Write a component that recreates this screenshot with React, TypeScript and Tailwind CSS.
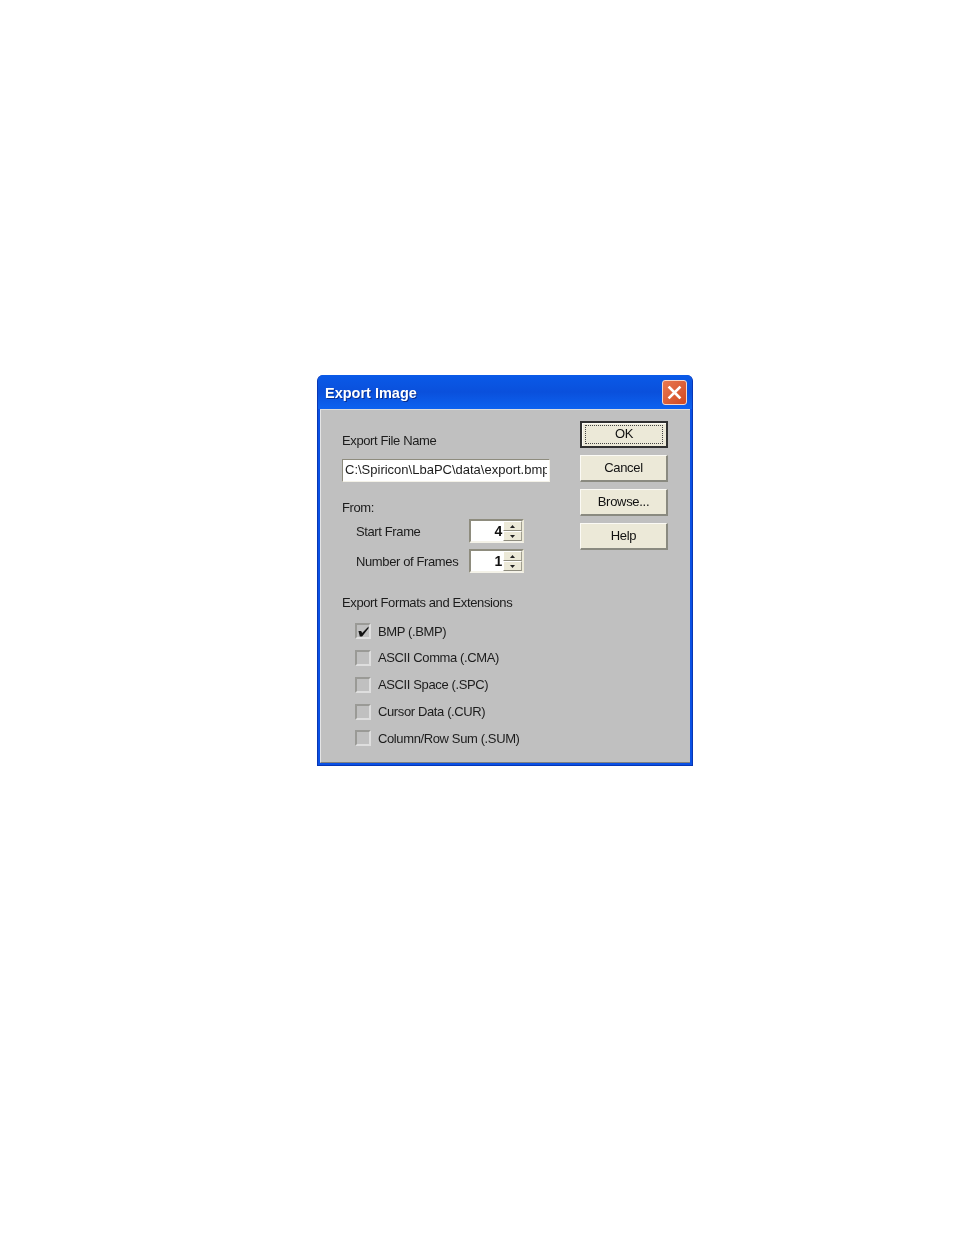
import React from 'react';

const formats = [
  { label: 'BMP (.BMP)', checked: true },
  { label: 'ASCII Comma (.CMA)', checked: false },
  { label: 'ASCII Space (.SPC)', checked: false },
  { label: 'Cursor Data (.CUR)', checked: false },
  { label: 'Column/Row Sum (.SUM)', checked: false },
];

const DialogButton = ({ label, primary = false }: { label: string; primary?: boolean }) => (
  <button
    className={`w-[88px] h-[27px] flex items-center justify-center bg-[#ece9d8] text-[13px] tracking-[-0.3px] text-[#111] ${
      primary
        ? 'border-2 border-[#303030] shadow-[inset_1px_1px_0_#fbfaf5]'
        : 'border border-t-[#fbfaf5] border-l-[#fbfaf5] border-r-[#8a8a80] border-b-[#8a8a80] border-r-2 border-b-2'
    }`}
  >
    {primary ? (
      <span className="w-[78px] h-[19px] flex items-center justify-center border border-dotted border-[#444] pb-[2px]">{label}</span>
    ) : (
      label
    )}
  </button>
);

const Spinner = ({ value }: { value: string }) => (
  <div className="w-[55px] h-[24px] shrink-0 flex bg-white border-2 border-t-[#8e8c7e] border-l-[#8e8c7e] border-r-[#ece9d8] border-b-[#f4f2e8]">
    <span className="flex-1 text-right pr-[1px] text-[14px] font-bold leading-[20px] text-[#111]">{value}</span>
    <div className="w-[19px] flex flex-col">
      <div className="flex-1 flex items-center justify-center bg-[#ece9d8] border border-t-white border-l-white border-r-[#a09e90] border-b-[#8e8c7e]">
        <svg width="5" height="3" viewBox="0 0 5 3"><path d="M2.5 0 5 3H0z" fill="#222" /></svg>
      </div>
      <div className="flex-1 flex items-center justify-center bg-[#ece9d8] border border-t-white border-l-white border-r-[#a09e90] border-b-[#8e8c7e]">
        <svg width="5" height="3" viewBox="0 0 5 3"><path d="M0 0h5L2.5 3z" fill="#222" /></svg>
      </div>
    </div>
  </div>
);

const CheckRow = ({ label, checked }: { label: string; checked: boolean }) => (
  <div className="h-[26.75px] flex items-center">
    <span className="w-[16px] h-[16px] ml-[13px] mr-[7px] flex items-center justify-center border-2 border-t-[#9a9a96] border-l-[#9a9a96] border-r-[#dedede] border-b-[#dedede] bg-[#c0c0c0]">
      {checked && (
        <svg width="11" height="11" viewBox="0 0 12 12" className="shrink-0">
          <path d="M0.5 5.5 3.5 5.5 4.5 7.5 11.5 0.5 11.5 2.5 4.5 11.5 2 11.5z" fill="#111" />
        </svg>
      )}
    </span>
    <span>{label}</span>
  </div>
);

export default function App() {
  return (
    <div className="w-[954px] h-[1235px] bg-white pt-[375px] pl-[317px] font-['Liberation_Sans',Arial,sans-serif]">
      <div className="w-[376px] h-[391px] flex flex-col rounded-t-[6px] overflow-hidden bg-[#0a50e4] border-x border-b border-x-[#0836b4] border-b-[#0836b4] blur-[0.3px]">
        <div className="h-[34px] shrink-0 flex items-center justify-between pl-[7px] pr-[5px] bg-gradient-to-b from-[#0a5ae8] via-[#0a50dc] to-[#0d62f0]">
          <span className="pt-[3px] text-white font-bold text-[14.5px] [text-shadow:1px_1px_0_#0a2f90]">Export Image</span>
          <div className="w-[25px] h-[25px] flex items-center justify-center rounded-[3px] border border-[#f4d8cc] bg-gradient-to-br from-[#e87850] to-[#d04820]">
            <svg width="15" height="15" viewBox="0 0 15 15">
              <path d="M2.5 2.5 12.5 12.5M12.5 2.5 2.5 12.5" stroke="#fff" strokeWidth="2.6" strokeLinecap="square" />
            </svg>
          </div>
        </div>
        <div className="flex-1 mx-[2px] mb-[2px] bg-[#c0c0c0] flex text-[13px] tracking-[-0.38px] text-[#1c1c1c] border-t border-t-[#dcdcdc] border-l border-l-[#e4e4e4] border-b border-b-[#808080]">
          <div className="w-[259px] pl-[21px]">
            <div className="mt-[21px] h-[20px] leading-[20px]">Export File Name</div>
            <div className="mt-[8px] w-[208px] h-[23px] bg-white border border-t-[#8e8c7e] border-l-[#8e8c7e] border-r-[#f4f2e8] border-b-[#f4f2e8] pl-[2px] pr-[2px] leading-[20px] tracking-normal">
              <div className="overflow-hidden whitespace-nowrap">C:\Spiricon\LbaPC\data\export.bmp</div>
            </div>
            <div className="mt-[16px] h-[20px] leading-[20px]">From:</div>
            <div className="mt-[1px] h-[24px] flex items-center justify-between pl-[14px] w-[182px]">
              <span className="whitespace-nowrap pt-[1px]">Start Frame</span>
              <Spinner value="4" />
            </div>
            <div className="mt-[6px] h-[24px] flex items-center justify-between pl-[14px] w-[182px]">
              <span className="whitespace-nowrap pt-[1px]">Number of Frames</span>
              <Spinner value="1" />
            </div>
            <div className="mt-[20px] h-[20px] leading-[20px]">Export Formats and Extensions</div>
            <div className="mt-[5px]">
              {formats.map(f => (
                <CheckRow key={f.label} label={f.label} checked={f.checked} />
              ))}
            </div>
          </div>
          <div className="pt-[11px] flex flex-col gap-[7px]">
            <DialogButton label="OK" primary />
            <DialogButton label="Cancel" />
            <DialogButton label="Browse..." />
            <DialogButton label="Help" />
          </div>
        </div>
      </div>
    </div>
  );
}
